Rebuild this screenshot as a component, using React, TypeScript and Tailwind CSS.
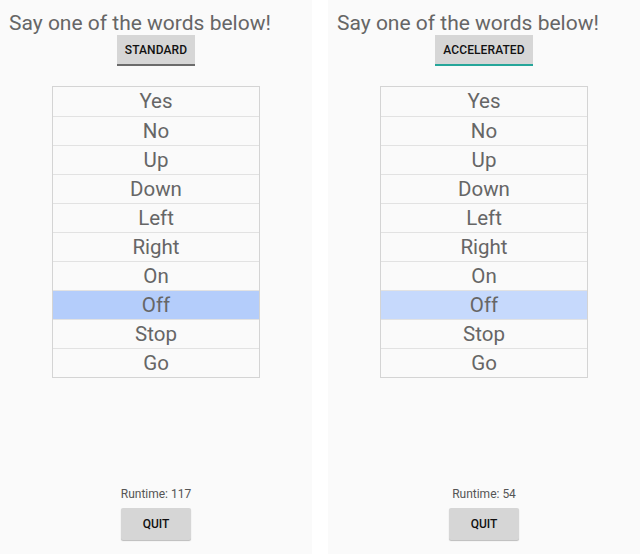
import React from "react";

const words = ["Yes", "No", "Up", "Down", "Left", "Right", "On", "Off", "Stop", "Go"];

function Screen({ mode, underline, highlight, runtime }: { mode: string; underline: string; highlight: string; runtime: string }) {
  return (
    <div className="w-[312px] h-[554px] bg-[#fafafa] flex flex-col items-center relative">
      <div className="w-full pl-[9px] pt-[9px] h-[35px] text-[21px] leading-[28px] text-[#666666] whitespace-nowrap">
        Say one of the words below!
      </div>
      <div className={`h-[31px] px-[8px] bg-[#d6d6d6] border-b-2 ${underline} flex items-center justify-center text-[12px] font-medium text-[#111] tracking-[0.1px]`}>
        {mode}
      </div>
      <div className="mt-[20px] w-[208px] border border-[#d4d4d4] flex flex-col">
        {words.map((w, i) => (
          <div
            key={w}
            className={`h-[29px] flex items-center justify-center text-[20.5px] text-[#666666] ${i > 0 ? "border-t border-[#e2e2e2]" : ""} ${w === "Off" ? highlight : ""}`}
          >
            {w}
          </div>
        ))}
      </div>
      <div className="mt-[108px] text-[12px] leading-[16px] text-[#555]">Runtime: {runtime}</div>
      <div className="mt-[6px] w-[70px] h-[32px] bg-[#d6d6d6] rounded-[2px] shadow-[0_1px_1px_rgba(0,0,0,0.25)] flex items-center justify-center text-[12px] font-medium text-[#111]">
        QUIT
      </div>
    </div>
  );
}

export default function App() {
  return (
    <div className="w-[640px] h-[554px] bg-white flex justify-between overflow-hidden" style={{ fontFamily: "Roboto, 'Noto Sans', sans-serif" }}>
      <Screen mode="STANDARD" underline="border-[#6b6b6b]" highlight="bg-[#b4cdfb]" runtime="117" />
      <Screen mode="ACCELERATED" underline="border-[#26a69a]" highlight="bg-[#c6d9fc]" runtime="54" />
    </div>
  );
}
